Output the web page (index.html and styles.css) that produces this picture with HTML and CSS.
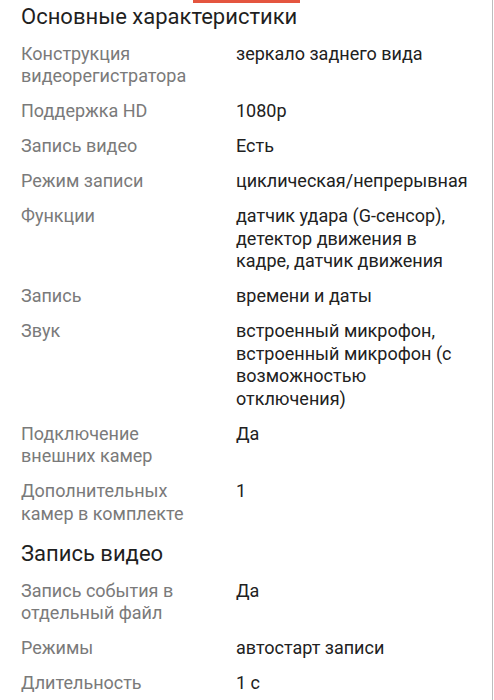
FILE: index.html
```html
<!DOCTYPE html>
<html lang="ru">
<head>
<meta charset="utf-8">
<link rel="stylesheet" href="styles.css">
</head>
<body>
<div class="page">
  <div class="tab-indicator"></div>
  <section class="group">
    <h2 class="group-title">Основные характеристики</h2>
    <dl class="specs">
      <dt>Конструкция видеорегистратора</dt><dd>зеркало заднего вида</dd>
      <dt>Поддержка HD</dt><dd>1080p</dd>
      <dt>Запись видео</dt><dd>Есть</dd>
      <dt>Режим записи</dt><dd>циклическая/непрерывная</dd>
      <dt>Функции</dt><dd>датчик удара (G-сенсор), детектор движения в кадре, датчик движения</dd>
      <dt>Запись</dt><dd>времени и даты</dd>
      <dt>Звук</dt><dd>встроенный микрофон, встроенный микрофон (с возможностью отключения)</dd>
      <dt>Подключение внешних камер</dt><dd>Да</dd>
      <dt>Дополнительных камер в комплекте</dt><dd>1</dd>
    </dl>
  </section>
  <section class="group">
    <h2 class="group-title">Запись видео</h2>
    <dl class="specs">
      <dt>Запись события в отдельный файл</dt><dd>Да</dd>
      <dt>Режимы</dt><dd>автостарт записи</dd>
      <dt>Длительность</dt><dd>1 с</dd>
    </dl>
  </section>
</div>
</body>
</html>
```

FILE: styles.css
```css
html, body {
  margin: 0;
  padding: 0;
  background: #ffffff;
}
body {
  font-family: Roboto, "Noto Sans", sans-serif;
  color: #222222;
  overflow: hidden;
}
.page {
  width: 493px;
  height: 700px;
  box-sizing: border-box;
  border-right: 1px solid #bdbdbd;
  padding: 0 24px 0 21px;
  overflow: hidden;
}
.tab-indicator {
  width: 107px;
  height: 3px;
  margin-left: 172px;
  background: #e4553f;
}
.group + .group {
  padding-top: 15px;
}
.group-title {
  margin: 0;
  font-size: 22px;
  font-weight: 400;
  line-height: 28px;
  color: #1f1f1f;
}
.specs {
  display: grid;
  grid-template-columns: 180px 1fr;
  column-gap: 35px;
  row-gap: 12.5px;
  margin: 11.5px 0 0;
  font-size: 18px;
  line-height: 22.5px;
}
.specs dt {
  color: #7a7a7a;
}
.specs dd {
  margin: 0;
  color: #212121;
}
```
